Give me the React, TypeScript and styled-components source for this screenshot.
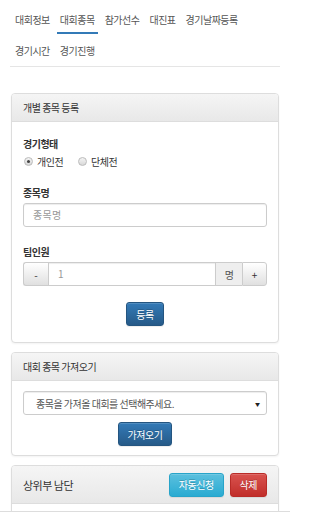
import React from "react";
import styled, { createGlobalStyle, css } from "styled-components";

const Global = createGlobalStyle`
  html, body { margin: 0; padding: 0; background: #fff; }
  body {
    font-family: "Noto Sans CJK KR", "Noto Sans", sans-serif;
    font-size: 10px;
    color: #333;
    letter-spacing: -0.5px;
  }
  * { box-sizing: border-box; }
`;

const Page = styled.div`
  width: 290px;
  padding: 0 10px;
  padding-bottom: 20px;
`;

const Nav = styled.ul`
  list-style: none;
  margin: 0;
  padding: 5px 12px 0 2px;
  display: flex;
  flex-wrap: wrap;
  border-bottom: 1px solid #e5e5e5;
  height: 67px;
`;

const Tab = styled.li<{ $active?: boolean }>`
  padding: 0 3px;
  margin-right: 4px;
  line-height: 29px;
  color: #555;
  border-bottom: 2px solid ${(p) => (p.$active ? "#337ab7" : "transparent")};
  height: 29px;
  margin-bottom: 1px;
`;

const Panel = styled.section<{ $first?: boolean }>`
  margin: ${(p) => (p.$first ? "26px" : "9px")} 1px 0 1px;
  border: 1px solid #ddd;
  border-radius: 4px;
  box-shadow: 0 1px 2px rgba(0, 0, 0, 0.05);
  overflow: hidden;
  background: #fff;
`;

const Heading = styled.div<{ $tall?: boolean }>`
  display: flex;
  align-items: center;
  justify-content: space-between;
  padding: ${(p) => (p.$tall ? "6px 11px" : "0 11px")};
  height: ${(p) => (p.$tall ? "38px" : "28px")};
  background: linear-gradient(#f5f5f5, #e8e8e8);
  border-bottom: 1px solid #ddd;
  color: #333;
  font-size: ${(p) => (p.$tall ? "11px" : "10px")};
`;

const Body = styled.div<{ $pt: number; $pb: number }>`
  padding: ${(p) => p.$pt}px 11px ${(p) => p.$pb}px 11px;
`;

const Group = styled.div`
  margin-bottom: 18px;
`;

const Label = styled.div`
  font-weight: bold;
  line-height: 14px;
  height: 14px;
  color: #333;
  margin-bottom: 3px;
`;

const RadioRow = styled.div`
  display: flex;
  align-items: center;
  height: 14px;
  margin-top: 3px;
  padding-left: 1px;
`;

const RadioItem = styled.label`
  display: flex;
  align-items: center;
  gap: 4px;
  margin-right: 15px;
  color: #333;
`;

const RadioDot = styled.span<{ $checked?: boolean }>`
  position: relative;
  width: 9px;
  height: 9px;
  border-radius: 50%;
  border: 1px solid #bbb;
  background: linear-gradient(#f4f4f4, #d8d8d8);
  ${(p) =>
    p.$checked &&
    css`
      &::after {
        content: "";
        position: absolute;
        left: 2px;
        top: 2px;
        width: 3px;
        height: 3px;
        border-radius: 50%;
        background: #444;
      }
    `}
`;

const TextInput = styled.div`
  height: 24px;
  border: 1px solid #ccc;
  border-radius: 3px;
  box-shadow: inset 0 1px 1px rgba(0, 0, 0, 0.075);
  padding: 0 9px;
  line-height: 22px;
  color: #999;
  letter-spacing: 0.3px;
`;

const InputGroup = styled.div`
  display: flex;
  height: 24px;
`;

const StepBtn = styled.div<{ $side: "left" | "right" }>`
  width: 25px;
  display: flex;
  align-items: center;
  justify-content: center;
  border: 1px solid #ccc;
  background: linear-gradient(#fff, #e0e0e0);
  color: #333;
  font-size: 10px;
  letter-spacing: 0;
  border-radius: ${(p) => (p.$side === "left" ? "3px 0 0 3px" : "0 3px 3px 0")};
  ${(p) => (p.$side === "left" ? "border-right: none;" : "")}
`;

const GroupField = styled.div`
  flex: 1;
  border: 1px solid #ccc;
  box-shadow: inset 0 1px 1px rgba(0, 0, 0, 0.075);
  padding: 0 9px;
  line-height: 22px;
  color: #999;
  letter-spacing: 0;
`;

const Addon = styled.div`
  width: 26px;
  display: flex;
  align-items: center;
  justify-content: center;
  background: #eee;
  border: 1px solid #ccc;
  border-left: none;
  border-right: none;
  color: #555;
`;

const Center = styled.div<{ $mt: number }>`
  display: flex;
  justify-content: center;
  margin-top: ${(p) => p.$mt}px;
`;

const variants = {
  primary: css`
    background: linear-gradient(#337ab7, #265a88);
    border-color: #245580;
  `,
  info: css`
    background: linear-gradient(#5bc0de, #2aabd2);
    border-color: #28a4c9;
  `,
  danger: css`
    background: linear-gradient(#d9534f, #c12e2a);
    border-color: #b92c28;
  `,
};

const Button = styled.button<{ $v: keyof typeof variants }>`
  height: 24px;
  padding: 0 9px;
  border: 1px solid;
  border-radius: 3px;
  color: #fff;
  font-family: inherit;
  font-size: 10px;
  letter-spacing: -0.5px;
  text-shadow: 0 -1px 0 rgba(0, 0, 0, 0.2);
  box-shadow: inset 0 1px 0 rgba(255, 255, 255, 0.15), 0 1px 1px rgba(0, 0, 0, 0.075);
  ${(p) => variants[p.$v]}
`;

const Select = styled.div`
  height: 24px;
  border: 1px solid #ccc;
  border-radius: 3px;
  display: flex;
  align-items: center;
  justify-content: space-between;
  padding: 0 6px 0 12px;
  color: #555;
  box-shadow: inset 0 1px 1px rgba(0, 0, 0, 0.075);
`;

const Caret = styled.span`
  font-size: 5px;
  color: #222;
  letter-spacing: 0;
`;

const BtnRow = styled.div`
  display: flex;
  gap: 6px;
`;

const Footer = styled.div`
  position: fixed;
  left: 0;
  width: 290px;
  bottom: 0;
  height: 1px;
  background: #ddd;
`;

const tabs = ["대회정보", "대회종목", "참가선수", "대진표", "경기날짜등록", "경기시간", "경기진행"];

export default function App() {
  return (
    <>
      <Global />
      <Page>
        <Nav>
          {tabs.map((t) => (
            <Tab key={t} $active={t === "대회종목"}>
              {t}
            </Tab>
          ))}
        </Nav>

        <Panel $first>
          <Heading>개별 종목 등록</Heading>
          <Body $pt={15} $pb={16}>
            <Group>
              <Label>경기형태</Label>
              <RadioRow>
                <RadioItem>
                  <RadioDot $checked />
                  개인전
                </RadioItem>
                <RadioItem>
                  <RadioDot />
                  단체전
                </RadioItem>
              </RadioRow>
            </Group>
            <Group>
              <Label>종목명</Label>
              <TextInput>종목명</TextInput>
            </Group>
            <div>
              <Label>팀인원</Label>
              <InputGroup>
                <StepBtn $side="left">-</StepBtn>
                <GroupField>1</GroupField>
                <Addon>명</Addon>
                <StepBtn $side="right">+</StepBtn>
              </InputGroup>
            </div>
            <Center $mt={16}>
              <Button $v="primary">등록</Button>
            </Center>
          </Body>
        </Panel>

        <Panel>
          <Heading>대회 종목 가져오기</Heading>
          <Body $pt={10} $pb={9}>
            <Select>
              <span>종목을 가져올 대회를 선택해주세요.</span>
              <Caret>▼</Caret>
            </Select>
            <Center $mt={7}>
              <Button $v="primary">가져오기</Button>
            </Center>
          </Body>
        </Panel>

        <Panel>
          <Heading $tall>
            <span>상위부 남단</span>
            <BtnRow>
              <Button $v="info">자동신청</Button>
              <Button $v="danger">삭제</Button>
            </BtnRow>
          </Heading>
          <Body $pt={20} $pb={20} />
        </Panel>
      </Page>
      <Footer />
    </>
  );
}
